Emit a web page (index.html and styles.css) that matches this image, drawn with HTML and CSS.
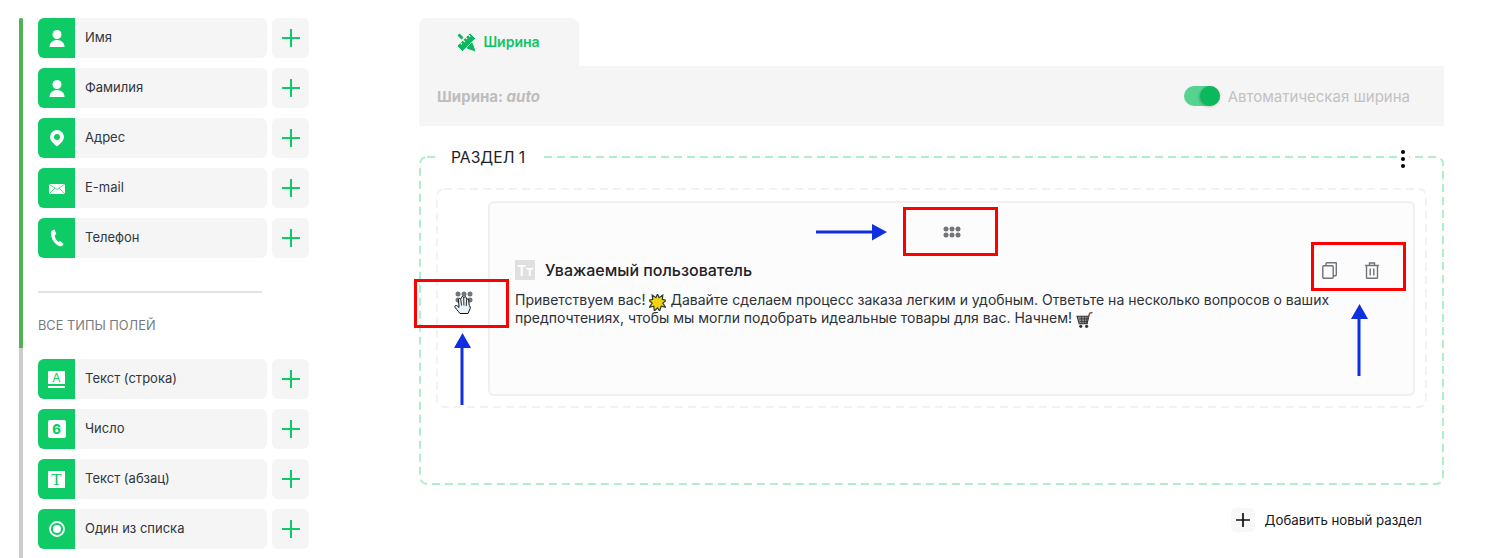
FILE: index.html
```html
<!DOCTYPE html>
<html lang="ru">
<head>
<meta charset="utf-8">
<title>Конструктор формы</title>
<link rel="stylesheet" href="styles.css">
</head>
<body>
<div class="page">
  <aside class="sidebar">
    <div class="scrollbar"><div class="thumb"></div></div>
    <div class="fields">
      <div class="group">
        <div class="row"><div class="field"><span class="ficon"><svg width="20" height="20" viewBox="0 0 20 20"><circle cx="10" cy="6.500" r="4.500" fill="#fff"/><path d="M2.500 19c0-4 3-7 7.500-7s7.500 3 7.500 7z" fill="#fff"/></svg></span><span class="flabel">Имя</span></div><button class="add"><svg width="20" height="20" viewBox="0 0 20 20"><path d="M10 1v18M1 10h18" stroke="#0ecb66" stroke-width="2"/></svg></button></div>
        <div class="row"><div class="field"><span class="ficon"><svg width="20" height="20" viewBox="0 0 20 20"><circle cx="10" cy="6.500" r="4.500" fill="#fff"/><path d="M2.500 19c0-4 3-7 7.500-7s7.500 3 7.500 7z" fill="#fff"/></svg></span><span class="flabel">Фамилия</span></div><button class="add"><svg width="20" height="20" viewBox="0 0 20 20"><path d="M10 1v18M1 10h18" stroke="#0ecb66" stroke-width="2"/></svg></button></div>
        <div class="row"><div class="field"><span class="ficon"><svg width="20" height="20" viewBox="0 0 20 20"><path fill-rule="evenodd" d="M10 2a7 7 0 0 0-7 7c0 3.500 4 7 7 9.500 3-2.500 7-6 7-9.500a7 7 0 0 0-7-7zm0 4a3 3 0 1 1 0 6 3 3 0 0 1 0-6z" fill="#fff"/></svg></span><span class="flabel">Адрес</span></div><button class="add"><svg width="20" height="20" viewBox="0 0 20 20"><path d="M10 1v18M1 10h18" stroke="#0ecb66" stroke-width="2"/></svg></button></div>
        <div class="row"><div class="field"><span class="ficon"><svg width="20" height="20" viewBox="0 0 20 20"><rect x="2" y="6" width="16" height="10" fill="#fff"/><path d="M2 6l8 5.500L18 6M2 16l6-6M18 16l-6-6" fill="none" stroke="#0ecb66" stroke-width=".7"/></svg></span><span class="flabel">E-mail</span></div><button class="add"><svg width="20" height="20" viewBox="0 0 20 20"><path d="M10 1v18M1 10h18" stroke="#0ecb66" stroke-width="2"/></svg></button></div>
        <div class="row"><div class="field"><span class="ficon"><svg width="20" height="20" viewBox="0 0 20 20"><path d="M7.500 1.500L5 2.500C3.500 3.500 3.500 6 4.500 9c1.200 4 4 7.500 7.500 9 1.500.6 3 .4 4-.8l.6-1.200-3.400-3-1.700 1C9.500 12.500 8 10 7.700 7.500L9.300 6z" fill="#fff"/></svg></span><span class="flabel">Телефон</span></div><button class="add"><svg width="20" height="20" viewBox="0 0 20 20"><path d="M10 1v18M1 10h18" stroke="#0ecb66" stroke-width="2"/></svg></button></div>
      </div>
      <div class="divider"></div>
      <div class="group-title">ВСЕ ТИПЫ ПОЛЕЙ</div>
      <div class="group">
        <div class="row"><div class="field"><span class="ficon"><span class="glyph glyph-a">A</span></span><span class="flabel">Текст (строка)</span></div><button class="add"><svg width="20" height="20" viewBox="0 0 20 20"><path d="M10 1v18M1 10h18" stroke="#0ecb66" stroke-width="2"/></svg></button></div>
        <div class="row"><div class="field"><span class="ficon"><span class="glyph glyph-6">6</span></span><span class="flabel">Число</span></div><button class="add"><svg width="20" height="20" viewBox="0 0 20 20"><path d="M10 1v18M1 10h18" stroke="#0ecb66" stroke-width="2"/></svg></button></div>
        <div class="row"><div class="field"><span class="ficon"><span class="glyph glyph-t">T</span></span><span class="flabel">Текст (абзац)</span></div><button class="add"><svg width="20" height="20" viewBox="0 0 20 20"><path d="M10 1v18M1 10h18" stroke="#0ecb66" stroke-width="2"/></svg></button></div>
        <div class="row"><div class="field"><span class="ficon"><svg width="20" height="20" viewBox="0 0 20 20"><circle cx="10" cy="10" r="7" fill="none" stroke="#fff" stroke-width="1.800"/><circle cx="10" cy="10" r="4" fill="#fff"/></svg></span><span class="flabel">Один из списка</span></div><button class="add"><svg width="20" height="20" viewBox="0 0 20 20"><path d="M10 1v18M1 10h18" stroke="#0ecb66" stroke-width="2"/></svg></button></div>
      </div>
    </div>
  </aside>

  <main class="main">
    <div class="tab">
      <svg width="20" height="20" viewBox="0 0 20 20"><path d="M1.500 3.500l2-2L7.500 5.500l-2 2zM12.500 11.500l2.500-2.500L17 12l2.500 7.500L12 17l-2.500-2.500z" fill="#0ab75c"/><path d="M14 1l5.500 5.500L6.500 19.500 1 14z" fill="#0ab75c" stroke="#f5f5f5" stroke-width=".8"/><path d="M12.500 3l1.800 1.800M9.800 5.700l1.300 1.300M7.200 8.300l1.800 1.800M4.600 10.900l1.300 1.300" stroke="#f5f5f5" stroke-width="1.300"/></svg>
      <span class="tab-label">Ширина</span>
    </div>
    <div class="panel">
      <div class="width-value">Ширина: <em>auto</em></div>
      <div class="auto-toggle"><span class="toggle"><span class="knob"></span></span><span>Автоматическая ширина</span></div>
    </div>

    <section class="section">
      <svg class="dash" width="1025" height="329"><rect x="1" y="1" width="1023" height="327" rx="7" fill="none" stroke="#aef0cb" stroke-width="2" stroke-dasharray="8 5"/></svg>
      <div class="section-title">РАЗДЕЛ 1</div>
      <div class="section-menu"><i></i><i></i><i></i></div>
      <div class="dropzone">
        <svg class="dash" width="991" height="220"><rect x="1" y="1" width="989" height="218" rx="7" fill="none" stroke="#f2f2f2" stroke-width="2" stroke-dasharray="8 5"/></svg>
        <div class="card">
          <div class="card-handle"><svg width="18" height="12" viewBox="0 0 18 12"><g fill="#70757a"><circle cx="3" cy="3" r="2.500"/><circle cx="9" cy="3" r="2.500"/><circle cx="15" cy="3" r="2.500"/><circle cx="3" cy="9" r="2.500"/><circle cx="9" cy="9" r="2.500"/><circle cx="15" cy="9" r="2.500"/></g></svg></div>
          <div class="card-body">
            <div class="card-content">
              <div class="card-title"><span class="tt">Tт</span><span>Уважаемый пользователь</span></div>
              <p class="card-text">Приветствуем вас! <svg class="emoji" width="17" height="17" viewBox="0 0 16 16"><path d="M8 0l1.500 3.500L13 1l-.5 4L16 6l-3 2.500 2.500 4-4-1L10 16l-2-3-3 3-.5-4.500-4 1L3 8.500 0 6l3.500-1L3 1l3.500 2.500z" fill="#f4d312" stroke="#243a2c" stroke-width="1.100"/></svg> Давайте сделаем процесс заказа легким и удобным. Ответьте на несколько вопросов о ваших предпочтениях, чтобы мы могли подобрать идеальные товары для вас. Начнем! <svg class="emoji" width="17" height="17" viewBox="0 0 16 16"><path d="M1 4h11l-1.500 7H3z" fill="#8b8f92" stroke="#333" stroke-width="1"/><path d="M3 6.500h8.500M3.500 9h7.500M5 4l.8 7M8 4v7M10.500 4l-.8 7" stroke="#333" stroke-width=".7"/><path d="M11.500 5L13 1l2.500-.5" fill="none" stroke="#7a4a3a" stroke-width="1.300"/><circle cx="4.500" cy="13.500" r="1.500" fill="#333"/><circle cx="10" cy="13.500" r="1.500" fill="#333"/></svg></p>
            </div>
            <div class="card-actions">
              <svg width="16" height="17" viewBox="0 0 16 17" fill="none" stroke="#6f7478" stroke-width="1.400"><rect x=".8" y="3.800" width="10.400" height="12.400" rx="1"/><path d="M4 3.500V1.700c0-.5.400-.9.900-.9h9.200c.1 0 .2.100.2.200v11.800c0 .5-.4.900-.9.900h-2.200"/></svg>
              <svg width="16" height="17" viewBox="0 0 16 17" fill="none" stroke="#6f7478" stroke-width="1.400"><path d="M1 3.500h14M5.500 3.300V1h5v2.300M2.500 3.500v12c0 .5.300.8.800.8h9.400c.5 0 .8-.3.800-.8v-12M6.200 6.500v7M9.800 6.500v7"/></svg>
            </div>
          </div>
        </div>
      </div>
    </section>

    <div class="add-section">
      <span class="add-section-icon"><svg width="16" height="16" viewBox="0 0 16 16"><path d="M8 1v14M1 8h14" stroke="#111" stroke-width="1.700"/></svg></span>
      <span>Добавить новый раздел</span>
    </div>
  </main>

  <div class="mark mark-left"></div>
  <div class="mark mark-top"></div>
  <div class="mark mark-right"></div>

  <svg class="arrow arrow-left" width="18" height="72" viewBox="0 0 18 72"><path d="M9 15v57" stroke="#0f2fe0" stroke-width="3"/><path d="M9.500 0L18 15H1z" fill="#0f2fe0"/></svg>
  <svg class="arrow arrow-right" width="18" height="72" viewBox="0 0 18 72"><path d="M9 15v57" stroke="#0f2fe0" stroke-width="3"/><path d="M9.500 0L18 15H1z" fill="#0f2fe0"/></svg>
  <svg class="arrow arrow-h" width="72" height="18" viewBox="0 0 72 18"><path d="M0 9h57" stroke="#0f2fe0" stroke-width="3"/><path d="M71 9L56 17.500V1z" fill="#0f2fe0"/></svg>

  <svg class="handle-left" width="18" height="12" viewBox="0 0 18 12"><g fill="#70757a"><circle cx="3" cy="3" r="2.500"/><circle cx="9" cy="3" r="2.500"/><circle cx="15" cy="3" r="2.500"/><circle cx="3" cy="9" r="2.500"/><circle cx="9" cy="9" r="2.500"/><circle cx="15" cy="9" r="2.500"/></g></svg>
  <svg class="cursor" width="20" height="20" viewBox="0 0 20 20"><path d="M6 18.500C4 16 .8 12.500.8 11.500c0-1.200 1.500-1.300 2.400-.6L5 12.500 4.500 4.500c0-1.300 1.800-1.400 2-.1L7.500 2.500c0-1.300 2-1.300 2.100 0l.6 0c.2-1.200 2-1.100 2 .2l.6 2c.3-1.100 1.900-1 1.900.3l.5 5.500c.8 0 1.800 2.500.3 4.500l-1.500 3.500z" fill="#e9f2fb" stroke="#111" stroke-width="1"/><path d="M6.800 4.500l.7 6M9.700 2.500l.2 8M12.600 5l-.4 6" stroke="#111" stroke-width=".9"/></svg>
</div>
</body>
</html>
```
FILE: styles.css
```css
* { box-sizing: border-box; }
html, body { margin: 0; background: #fff; }
body { font-family: Inter, "Liberation Sans", sans-serif; color: #2b3138; }

.page { position: relative; display: flex; width: 1489px; height: 558px; overflow: hidden; }

/* sidebar */
.sidebar { display: flex; width: 419px; flex: none; padding: 18px 0 0 19px; }
.scrollbar { width: 4px; height: 560px; background: #cccccc; border-radius: 2px 2px 0 0; flex: none; }
.thumb { height: 330px; background: #4fb354; border-radius: 2px 2px 0 0; }
.fields { margin-left: 15px; width: 271px; flex: none; }
.group { display: flex; flex-direction: column; gap: 10px; }
.row { display: flex; gap: 5px; height: 40px; }
.field { display: flex; align-items: center; width: 229px; background: #f5f5f5; border-radius: 6px; overflow: hidden; }
.ficon { display: flex; align-items: center; justify-content: center; width: 37px; height: 40px; background: #0ecb66; flex: none; }
.flabel { margin-left: 10px; padding-bottom: 2px; font-size: 13px; color: #30363d; }
.add { display: flex; align-items: center; justify-content: center; width: 37px; height: 40px; padding: 0; border: 0; background: #f5f5f5; border-radius: 6px; }

.glyph { display: block; width: 17px; height: 17px; background: #fff; color: #0ecb66; text-align: center; }
.glyph-a { font-size: 12px; line-height: 13px; border-bottom: 2px solid #0ecb66; height: 15px; margin-bottom: 2px; box-shadow: 0 2px 0 #fff; }
.glyph-6 { width: 18px; height: 18px; border-radius: 2px; font-size: 13px; line-height: 18px; font-weight: 800; }
.glyph-t { font-family: "Liberation Serif", serif; font-size: 17px; line-height: 17px; font-weight: 400; }

.divider { width: 224px; height: 2px; margin-top: 33px; background: #e2e2e2; }
.group-title { margin-top: 25px; margin-bottom: 26px; font-size: 12.800px; line-height: 15px; color: #777b80; }

/* main */
.main { display: flex; flex-direction: column; width: 1025px; flex: none; padding-top: 18px; }
.tab { display: flex; align-items: center; justify-content: center; gap: 7px; width: 160px; height: 48px; background: #f5f5f5; border-radius: 8px 8px 0 0; color: #0ec566; font-size: 14px; font-weight: 600; padding-right: 2px; }
.tab-label { padding-bottom: 2px; }
.panel { display: flex; align-items: center; justify-content: space-between; height: 60px; padding: 0 34px 0 18px; background: #f5f5f5; }
.width-value { font-size: 15px; font-weight: 700; color: #bdbdbd; }
.width-value em { font-style: italic; }
.auto-toggle { display: flex; align-items: center; gap: 8px; font-size: 15px; color: #c2c2c2; }
.toggle { display: block; width: 36px; height: 20px; background: #54d48f; border-radius: 10px; position: relative; }
.knob { position: absolute; right: 0; top: 0; width: 20px; height: 20px; border-radius: 50%; background: #0bb95c; box-shadow: -1px 1px 3px rgba(0,0,0,.2); }

.section { position: relative; height: 329px; margin-top: 30px; padding: 32px 17px 0; }
.dash { position: absolute; left: 0; top: 0; }
.section-title { position: absolute; left: 17px; top: -8px; padding: 0 18px 0 15px; background: #fff; font-size: 15.700px; line-height: 20px; color: #1d2228; }
.section-menu { position: absolute; right: 35px; top: -6px; display: flex; flex-direction: column; gap: 3px; width: 12px; padding: 0 4px; background: #fff; }
.section-menu i { display: block; width: 4px; height: 4px; border-radius: 50%; background: #000; }

.dropzone { position: relative; height: 220px; padding: 13px 12px 12px 52px; }
.card { position: relative; height: 100%; border: 2px solid #f0f0f0; border-radius: 6px; background: #fcfcfc; }
.card-handle { display: flex; justify-content: center; padding-top: 23px; height: 57px; }
.card-body { display: flex; padding: 0 33px 0 25px; }
.card-content { width: 822px; flex: none; }
.card-title { display: flex; align-items: center; gap: 10px; font-size: 16px; font-weight: 500; color: #1d2228; height: 20px; }
.tt { display: flex; align-items: center; justify-content: center; width: 20px; height: 20px; background: #e0e0e0; color: #fff; font-size: 14px; font-weight: 600; }
.card-text { margin: 11px 0 0; font-size: 14px; line-height: 17px; color: #2b3138; }
.emoji { vertical-align: -4px; margin: -2px 0; }
.card-actions { display: flex; gap: 26px; margin-left: -15px; margin-top: 2px; align-items: flex-start; }

.add-section { display: flex; align-items: center; justify-content: flex-end; gap: 10px; margin-top: 23px; padding-right: 22px; font-size: 13.250px; color: #15191d; }
.add-section-icon { display: flex; align-items: center; justify-content: center; width: 24px; height: 24px; background: #f8f8f8; border-radius: 5px; }

/* annotations laid over the screenshot */
.mark { position: absolute; border: 3px solid #ff0000; width: 95px; height: 49px; }
.mark-left { left: 414px; top: 279px; }
.mark-top { left: 903px; top: 207px; }
.mark-right { left: 1311px; top: 242px; }
.arrow { position: absolute; }
.arrow-left { left: 453px; top: 333px; }
.arrow-right { left: 1350px; top: 304px; }
.arrow-h { left: 816px; top: 223px; }
.handle-left { position: absolute; left: 455px; top: 291px; }
.cursor { position: absolute; left: 454px; top: 295px; }
```
